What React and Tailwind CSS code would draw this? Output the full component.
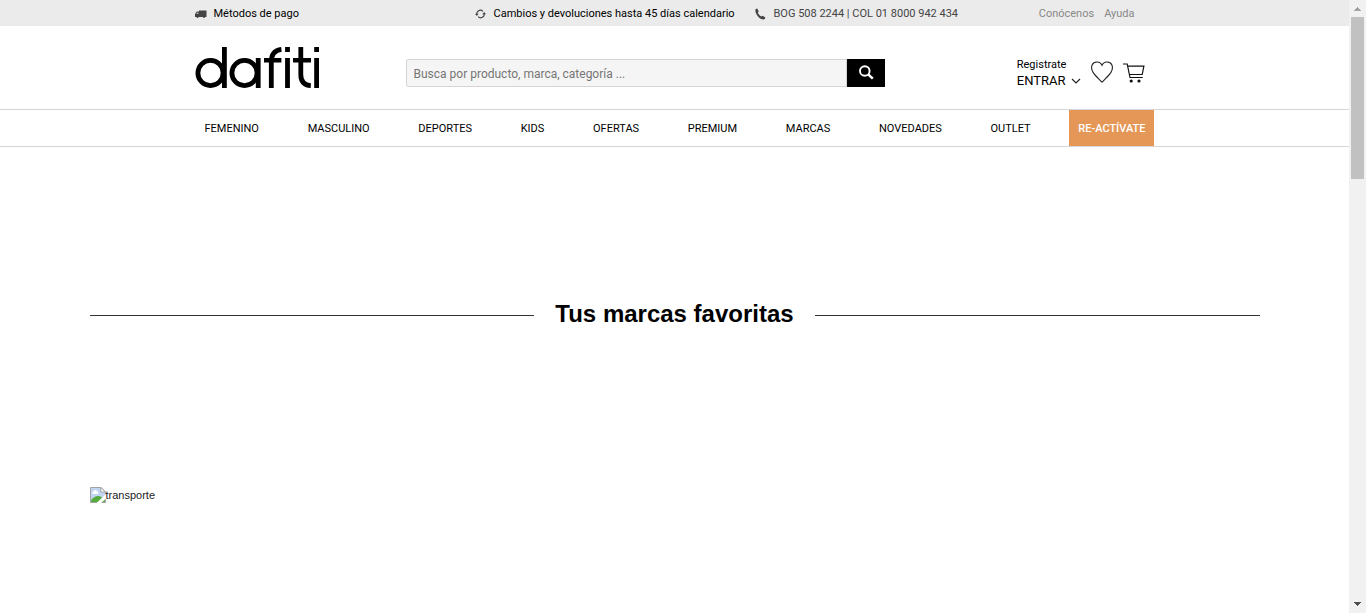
import React from "react";

const navItems = [
  "FEMENINO",
  "MASCULINO",
  "DEPORTES",
  "KIDS",
  "OFERTAS",
  "PREMIUM",
  "MARCAS",
  "NOVEDADES",
  "OUTLET",
];

function TruckIcon() {
  return (
    <svg width="12" height="8" viewBox="0 0 12 8" fill="#444" aria-hidden="true">
      <path d="M4 0.500H11.500V7H4z" />
      <path d="M0 7V4L1.800 1.500H4V7z" />
      <path d="M1.200 4L2.300 2.500H3.300V4z" fill="#bbb" />
      <circle cx="2.600" cy="7" r="1" />
      <circle cx="9" cy="7" r="1" />
    </svg>
  );
}

function RefreshIcon() {
  return (
    <svg width="11" height="10" viewBox="0 0 12 10" fill="none" stroke="#444" strokeWidth="1.3" aria-hidden="true">
      <path d="M2 5.600A3.900 3.900 0 0 1 8.600 2.100" />
      <path d="M10 4.400A3.900 3.900 0 0 1 3.400 7.900" />
      <path d="M0 4.600h4L2 7.200z" fill="#444" stroke="none" />
      <path d="M8 5.400h4L10 2.800z" fill="#444" stroke="none" />
    </svg>
  );
}

function PhoneIcon() {
  return (
    <svg width="11" height="12" viewBox="0 0 11 12" fill="#444" aria-hidden="true">
      <path d="M0.400 1.600C0.900 0.900 1.600 0.600 2.200 0.500L3.800 3.400 2.800 4.600C3.300 6.200 4.700 7.800 6.300 8.600L7.600 7.800 10.400 9.600C10.200 10.500 9.600 11.100 8.800 11.400 4.600 11.600 0 6.200 0.400 1.600z" />
    </svg>
  );
}

function Logo() {
  return (
    <svg width="125" height="42" viewBox="0 0 125 42" fill="none" stroke="#000" strokeWidth="4.800" role="img" aria-label="dafiti">
      <circle cx="15.500" cy="26" r="12.600" />
      <path d="M29.400 0v41" />
      <circle cx="49.500" cy="26" r="12.600" />
      <path d="M63.200 11v30" />
      <path d="M76.300 41V15C76.300 7.500 79.500 3.200 86.400 2.400" />
      <path d="M69 13.200h17.400M98 13.200h18" strokeWidth="4.400" />
      <path d="M92.500 0v5M92.500 11v30M121.600 0v5M121.600 11v30" />
      <path d="M105.800 0v27.500C105.800 34.500 108.800 38.200 115.800 38.600" />
    </svg>
  );
}

function SearchIcon() {
  return (
    <svg width="16" height="15" viewBox="0 0 16 15" fill="none" stroke="#fff" aria-hidden="true">
      <circle cx="6.800" cy="6" r="4.800" strokeWidth="1.900" />
      <path d="M10.200 9.400l4.600 4.200" strokeWidth="2.600" />
    </svg>
  );
}

function HeartIcon() {
  return (
    <svg width="22" height="22" viewBox="0 0 22 22" fill="none" stroke="#222" strokeWidth="1.100" aria-hidden="true">
      <path d="M11 21.200C8 18 4.500 15 2.200 11.600 0.600 9.200 0 6.600 1.200 3.800 2.600 0.700 8.800-0.600 11 4.400 13.200-0.600 19.400 0.700 20.800 3.800 22 6.600 21.400 9.200 19.800 11.600 17.500 15 14 18 11 21.200z" />
    </svg>
  );
}

function CartIcon() {
  return (
    <svg width="22" height="20" viewBox="0 0 22 20" fill="none" stroke="#111" strokeWidth="1.200" aria-hidden="true">
      <path d="M0 1h4.200L7 14.500h12.800" />
      <path d="M4.600 3.100h16.300L19.200 11.500H6.400" />
      <circle cx="8.200" cy="18" r="1.600" fill="#111" stroke="none" />
      <circle cx="16" cy="18" r="1.600" fill="#111" stroke="none" />
    </svg>
  );
}

function BrokenImageIcon() {
  return (
    <svg width="16" height="16" viewBox="0 0 16 16" aria-hidden="true">
      <path d="M0.500 0.500H11L15.500 5V15.500H0.500z" fill="#c2d5f4" stroke="#a3a3a3" />
      <path d="M3 7a1.500 1.500 0 0 1 .6-2.800 2 2 0 0 1 3.700.4A1.250 1.250 0 0 1 7.600 7z" fill="#fff" />
      <path d="M1 15v-1.500C3 10.500 5.500 9 8 9s5 2 7 4.500V15z" fill="#55ab3b" />
      <path d="M16 7L6.500 16H11l5-4.500z" fill="#fff" />
      <path d="M10.800 0.500V5H15.500z" fill="#fff" stroke="#a3a3a3" />
    </svg>
  );
}

function ScrollRail() {
  return (
    <div aria-hidden="true" className="flex w-[17px] shrink-0 flex-col items-center justify-between bg-[#f1f1f1]">
      <div className="flex flex-col items-center">
        <div className="flex h-[17px] items-center">
          <svg width="7" height="4" viewBox="0 0 7 4" fill="#a3a3a3" shapeRendering="crispEdges">
            <path d="M3 0h1v1h1v1h1v1h1v1H0V3h1V2h1V1h1z" />
          </svg>
        </div>
        <div className="h-[162px] w-[13px] bg-[#c1c1c1]" />
      </div>
      <div className="flex h-[18px] items-center">
        <svg width="7" height="4" viewBox="0 0 7 4" fill="#505050" shapeRendering="crispEdges">
          <path d="M0 0h7v1H6v1H5v1H4v1H3V3H2V2H1V1H0z" />
        </svg>
      </div>
    </div>
  );
}

export default function App() {
  return (
    <div className="flex min-h-screen bg-white font-['Roboto',sans-serif] text-[11px] leading-4 text-black">
      <div className="min-w-0 flex-1">
        <div className="bg-[#ebebeb]">
          <div className="mx-auto grid h-[26px] max-w-[960px] grid-cols-[280px_280px_1fr_auto] items-center pr-5 pt-0.5">
            <a href="#pago" className="flex items-center gap-[7px]">
              <TruckIcon />
              Métodos de pago
            </a>
            <a href="#cambios" className="flex items-center gap-2">
              <RefreshIcon />
              Cambios y devoluciones hasta 45 días calendario
            </a>
            <div className="flex items-center gap-2 text-[#444]">
              <PhoneIcon />
              BOG 508 2244 | COL 01 8000 942 434
            </div>
            <div className="flex gap-[10px] text-[#888]">
              <a href="#conocenos">Conócenos</a>
              <a href="#ayuda">Ayuda</a>
            </div>
          </div>
        </div>

        <header className="border-b border-[#d5d5d5]">
          <div className="mx-auto flex h-[83px] max-w-[960px] items-center pr-[10px]">
            <a href="#inicio" className="mr-[86px]">
              <Logo />
            </a>
            <form className="mt-[10px] flex h-7 w-[479px]" onSubmit={(e) => e.preventDefault()}>
              <input
                type="search"
                aria-label="Buscar"
                placeholder="Busca por producto, marca, categoría ..."
                className="min-w-0 flex-1 rounded-l-[2px] border border-[#d5d5d5] bg-[#f5f5f5] px-[7px] pt-0.5 text-[12px] outline-none placeholder:text-[#757575]"
              />
              <button type="submit" aria-label="Buscar" className="flex w-[38px] items-center justify-center bg-black">
                <SearchIcon />
              </button>
            </form>
            <div className="ml-auto mt-[10px] flex items-center gap-[10px]">
              <div>
                <a href="#registro" className="block">Registrate</a>
                <button type="button" className="flex items-center gap-[5px] text-[13px] leading-4">
                  ENTRAR
                  <svg width="10" height="6" viewBox="0 0 10 6" fill="none" stroke="#222" strokeWidth="1.200" aria-hidden="true">
                    <path d="M1 1l4 4 4-4" />
                  </svg>
                </button>
              </div>
              <a href="#favoritos" aria-label="Favoritos" className="pb-0.5">
                <HeartIcon />
              </a>
              <a href="#carrito" aria-label="Carrito">
                <CartIcon />
              </a>
            </div>
          </div>
        </header>

        <nav className="border-b border-[#d5d5d5]">
          <ul className="mx-auto flex h-9 max-w-[960px] justify-between">
            {navItems.map((item) => (
              <li key={item}>
                <a href={"#" + item.toLowerCase()} className="flex h-full items-center px-[10px] pt-0.5">
                  {item}
                </a>
              </li>
            ))}
            <li>
              <a href="#reactivate" className="flex h-full items-center bg-[#e59757] px-[9px] pt-0.5 font-medium text-white">
                RE-ACTÍVATE
              </a>
            </li>
          </ul>
        </nav>

        <main className="mx-auto max-w-[1170px] pt-[151px]">
          <div className="flex items-center gap-[21px]">
            <span className="mt-0.5 h-px flex-1 bg-[#333]" />
            <h2 className="font-['Liberation_Sans',Arial,sans-serif] text-[24px] font-bold leading-8">
              Tus marcas favoritas
            </h2>
            <span className="mt-0.5 h-px flex-1 bg-[#333]" />
          </div>
          <a href="#transporte" className="mt-[157px] flex items-center font-['Liberation_Sans',Arial,sans-serif] text-[#222]">
            <BrokenImageIcon />
            transporte
          </a>
        </main>
      </div>
      <ScrollRail />
    </div>
  );
}
